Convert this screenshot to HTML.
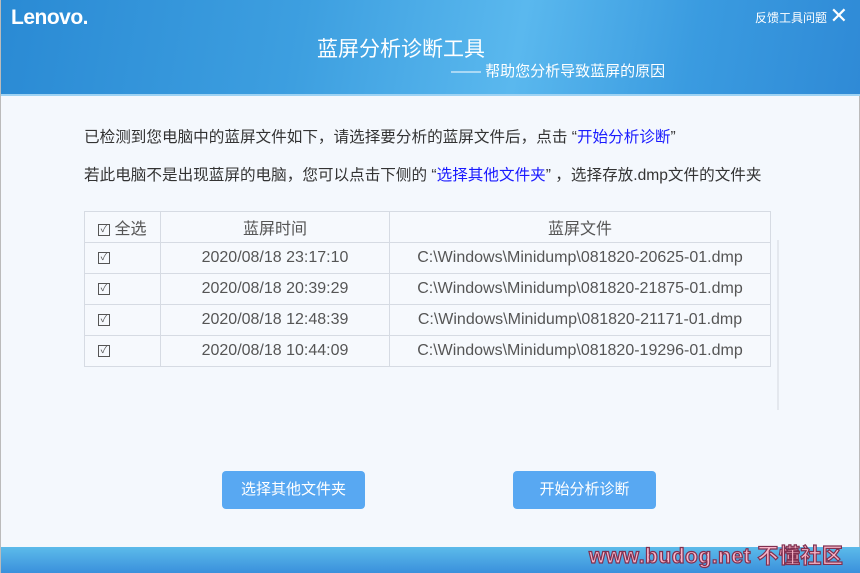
<!DOCTYPE html>
<html><head><meta charset="utf-8"><style>
*{margin:0;padding:0;box-sizing:border-box}
body{width:860px;height:573px;overflow:hidden;background:#f4f8fd;font-family:"Liberation Sans","Noto Sans CJK SC",sans-serif;position:relative;border-left:1px solid #bbb;border-right:1px solid #bbb}
.hdr{position:absolute;left:0;top:0;width:860px;height:96px;background:linear-gradient(100deg,#2a8ad4 0%,#3d9fe0 35%,#5ab8ee 60%,#3a9be0 80%,#2f8ad6 100%);border-bottom:2px solid #9fd3f3}
.logo{position:absolute;left:10px;top:6px;color:#fff;font-size:21px;font-weight:bold;letter-spacing:-0.5px}
.fb{position:absolute;right:34px;top:9px;color:#fff;font-size:12px}
.x{position:absolute;right:13px;top:3px;color:#fff;font-size:22px}
.t1{position:absolute;left:316px;top:33px;color:#fff;font-size:21px}
.t2{position:absolute;left:450px;top:60px;color:#fff;font-size:15px}
.p{position:absolute;left:83px;font-size:15.6px;color:#333;white-space:nowrap}
.p b{font-weight:normal;color:#1a1aff}
table{position:absolute;left:83px;top:211px;width:687px;border-collapse:collapse;font-size:16px;color:#555;background:#f6f9fd}
td{border:1px solid #d6dbe3;height:31px;text-align:center}
td.c{text-align:left;padding-left:13px;width:76px}
.cb{display:inline-block;width:12px;height:12px;border:1px solid #555;font-size:10px;line-height:10px;text-align:center;vertical-align:middle;position:relative;top:0}
.btn{position:absolute;top:471px;height:38px;width:143px;background:#58a8f2;color:#fff;border-radius:4px;font-size:15px;text-align:center;line-height:38px}
.foot{position:absolute;left:0;top:547px;width:860px;height:26px;background:linear-gradient(#5cbbea,#3a90dc)}
.wm{position:absolute;left:588px;top:540px;font-size:21px;font-weight:bold;color:#f8b5c8;-webkit-text-stroke:1.2px #803050;letter-spacing:0.5px}
.sb{position:absolute;left:776px;top:240px;width:2px;height:170px;background:#e4e8ee}
</style></head><body>
<div class="hdr"><div class="logo">Lenovo.</div><div class="fb">反馈工具问题</div><div class="x">✕</div>
<div class="t1">蓝屏分析诊断工具</div><div class="t2">—— 帮助您分析导致蓝屏的原因</div></div>
<div class="p" style="top:125px">已检测到您电脑中的蓝屏文件如下，请选择要分析的蓝屏文件后，点击 “<b>开始分析诊断</b>”</div>
<div class="p" style="top:163px">若此电脑不是出现蓝屏的电脑，您可以点击下侧的 “<b>选择其他文件夹</b>” ，选择存放.dmp文件的文件夹</div>
<div class="sb"></div>
<table>
<tr><td class="c"><span class="cb">✓</span> 全选</td><td style="width:229px">蓝屏时间</td><td>蓝屏文件</td></tr>
<tr><td class="c"><span class="cb">✓</span></td><td>2020/08/18 23:17:10</td><td>C:\Windows\Minidump\081820-20625-01.dmp</td></tr>
<tr><td class="c"><span class="cb">✓</span></td><td>2020/08/18 20:39:29</td><td>C:\Windows\Minidump\081820-21875-01.dmp</td></tr>
<tr><td class="c"><span class="cb">✓</span></td><td>2020/08/18 12:48:39</td><td>C:\Windows\Minidump\081820-21171-01.dmp</td></tr>
<tr><td class="c"><span class="cb">✓</span></td><td>2020/08/18 10:44:09</td><td>C:\Windows\Minidump\081820-19296-01.dmp</td></tr>
</table>
<div class="btn" style="left:221px">选择其他文件夹</div>
<div class="btn" style="left:512px">开始分析诊断</div>
<div class="foot"></div>
<div class="wm">www.budog.net 不懂社区</div>
</body></html>
